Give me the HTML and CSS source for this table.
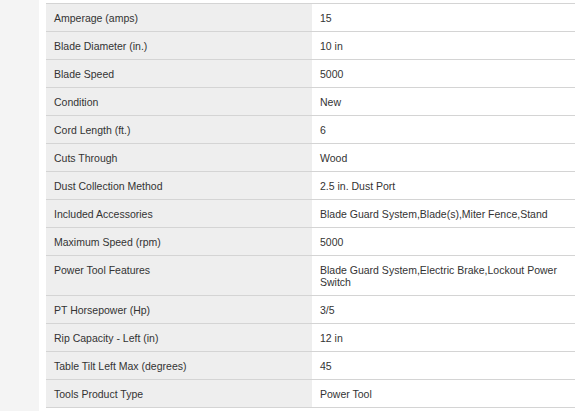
FILE: index.html
```
<!DOCTYPE html>
<html>
<head>
<meta charset="utf-8">
<link rel="stylesheet" href="styles.css">
</head>
<body>
<div class="page">
  <div class="side"></div>
  <div class="main">
    <table class="specs">
      <tbody>
        <tr><th>Amperage (amps)</th><td>15</td></tr>
        <tr><th>Blade Diameter (in.)</th><td>10 in</td></tr>
        <tr><th>Blade Speed</th><td>5000</td></tr>
        <tr><th>Condition</th><td>New</td></tr>
        <tr><th>Cord Length (ft.)</th><td>6</td></tr>
        <tr><th>Cuts Through</th><td>Wood</td></tr>
        <tr><th>Dust Collection Method</th><td>2.5 in. Dust Port</td></tr>
        <tr><th>Included Accessories</th><td>Blade Guard System,Blade(s),Miter Fence,Stand</td></tr>
        <tr><th>Maximum Speed (rpm)</th><td>5000</td></tr>
        <tr><th>Power Tool Features</th><td>Blade Guard System,Electric Brake,Lockout Power Switch</td></tr>
        <tr><th>PT Horsepower (Hp)</th><td>3/5</td></tr>
        <tr><th>Rip Capacity - Left (in)</th><td>12 in</td></tr>
        <tr><th>Table Tilt Left Max (degrees)</th><td>45</td></tr>
        <tr><th>Tools Product Type</th><td>Power Tool</td></tr>
      </tbody>
    </table>
  </div>
</div>
</body>
</html>
```
FILE: styles.css
```
html, body {
  margin: 0;
  padding: 0;
  background: #ffffff;
  overflow: hidden;
}
.page {
  display: flex;
  height: 411px;
  font-family: "Liberation Sans", Arial, sans-serif;
  font-size: 10.5px;
  color: #333333;
}
.side {
  width: 39px;
  flex: none;
  background: #f4f4f4;
}
.main {
  flex: none;
  margin-left: 7px;
  padding-top: 3px;
}
.specs {
  border-collapse: collapse;
  width: 532px;
  table-layout: fixed;
}
.specs th,
.specs td {
  text-align: left;
  font-weight: normal;
  vertical-align: top;
  line-height: 12px;
  padding: 8px 8px 7px 8px;
  border-top: 1px solid #d4d4d4;
  border-bottom: 1px solid #d4d4d4;
}
.specs th {
  width: 250px;
  background: #eeeeee;
}
.specs td {
  background: #ffffff;
}
```
